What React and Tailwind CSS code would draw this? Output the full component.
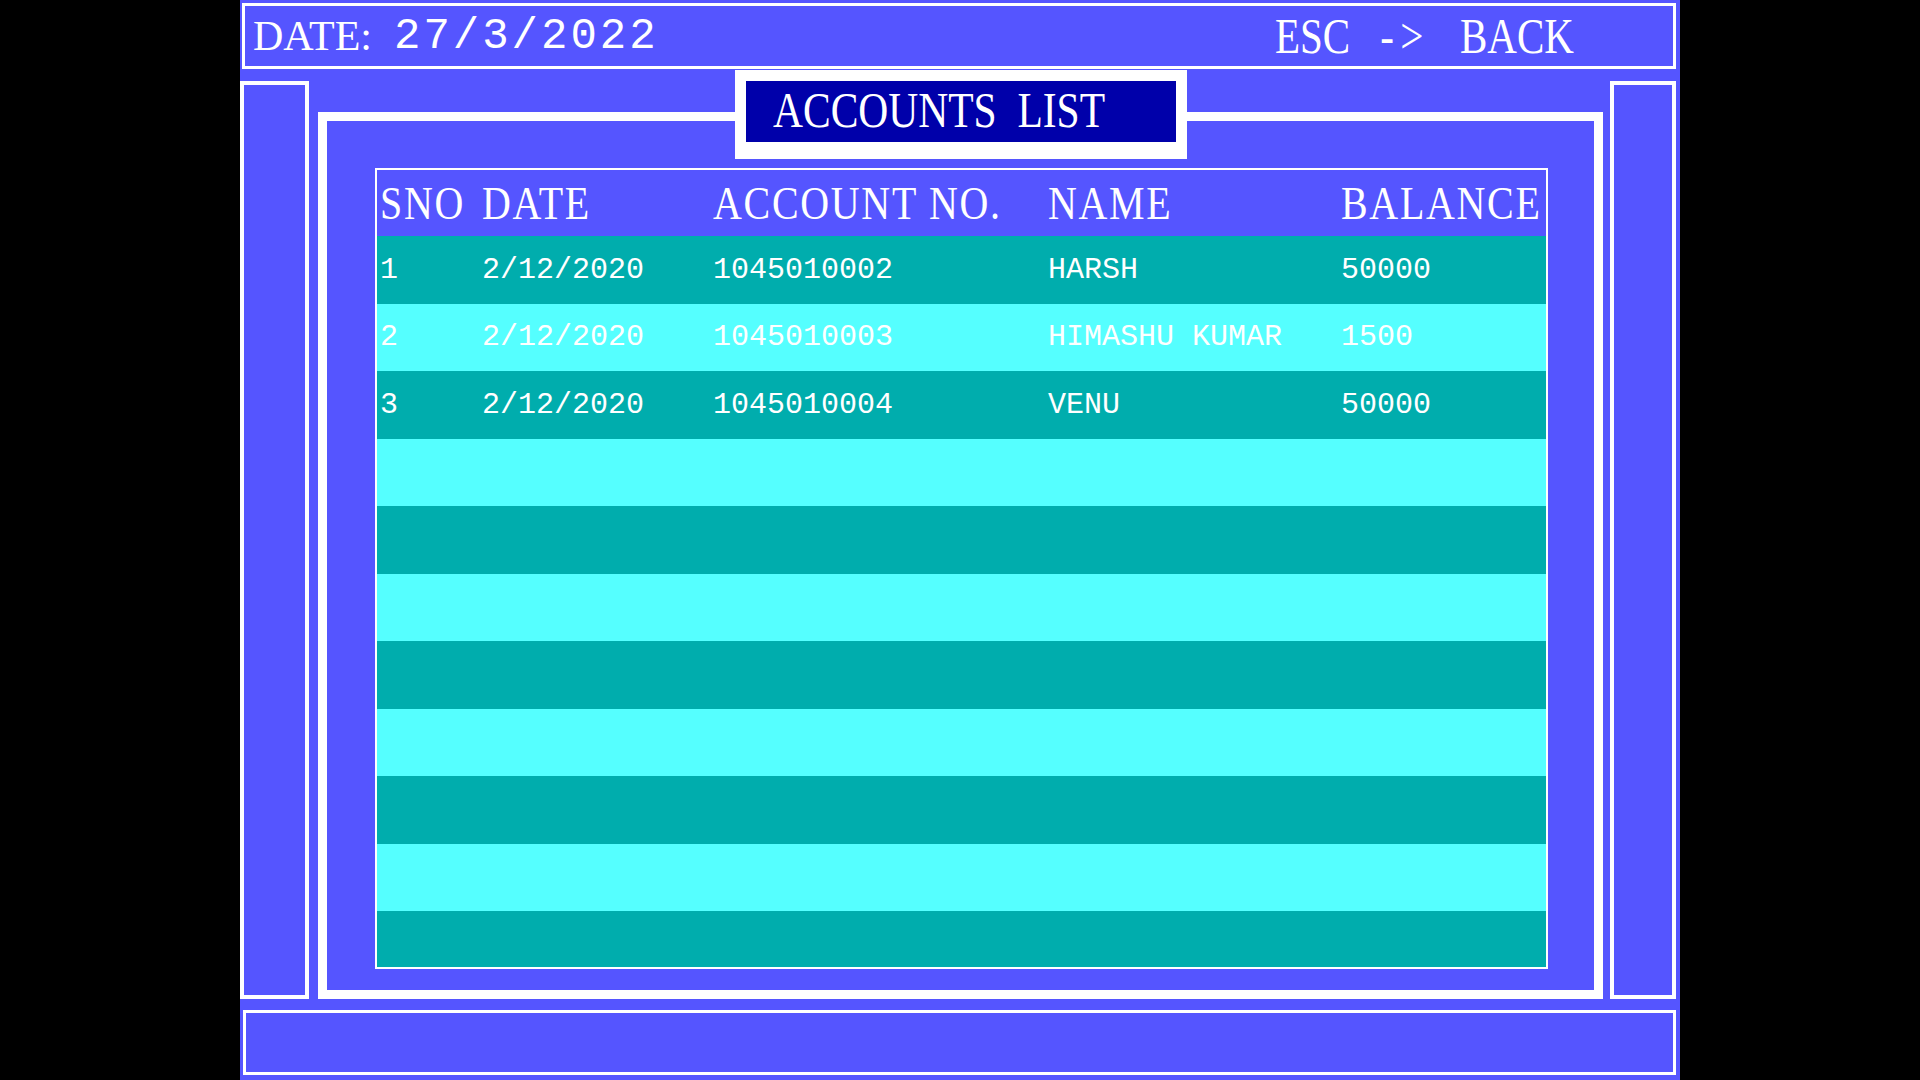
import React from "react";

const rows = [
  ["1", "2/12/2020", "1045010002", "HARSH", "50000"],
  ["2", "2/12/2020", "1045010003", "HIMASHU KUMAR", "1500"],
  ["3", "2/12/2020", "1045010004", "VENU", "50000"],
  ["", "", "", "", ""],
  ["", "", "", "", ""],
  ["", "", "", "", ""],
  ["", "", "", "", ""],
  ["", "", "", "", ""],
  ["", "", "", "", ""],
  ["", "", "", "", ""],
];

const serif = "font-['Liberation_Serif',serif]";
const mono = "font-['Liberation_Mono',monospace]";

function HeaderCell({ children }) {
  return (
    <div className="flex items-center h-full">
      <span className={`${serif} text-[47px] leading-none tracking-[2px] text-white whitespace-pre inline-block origin-left scale-x-[0.85]`}>
        {children}
      </span>
    </div>
  );
}

export default function App() {
  return (
    <div className="w-[1920px] h-[1080px] bg-black flex justify-center overflow-hidden">
      <div className="w-[1440px] h-[1080px] bg-[#5555FF] flex flex-col">
        {/* Top bar */}
        <div className="mt-[3px] ml-[2px] w-[1434px] h-[66px] border-[3px] border-white flex items-center shrink-0">
          <div className="w-[1030px] pl-[8px] flex items-center text-white">
            <span className={`${serif} text-[42px] leading-none`}>DATE:</span>
            <span className={`${mono} text-[44px] leading-none tracking-[3px] ml-[22px]`}>27/3/2022</span>
          </div>
          <span className={`${serif} text-[50px] leading-none text-white whitespace-pre inline-block origin-left scale-x-[0.82] [word-spacing:24px]`}>
            ESC <span className="tracking-[8px]">-&gt;</span> BACK
          </span>
        </div>

        {/* Middle */}
        <div className="mt-[12px] h-[918px] flex shrink-0">
          <div className="w-[69px] border-[4px] border-white" />
          <div className="ml-[9px] w-[1285px] mt-[31px] relative border-[9px] border-white pt-[47px] pl-[48px] pr-[46px] pb-[21px]">
            {/* Title */}
            <div className="absolute top-[-51px] left-[408px] w-[452px] h-[89px] bg-white pt-[11px] px-[11px] pb-[17px]">
              <div className="w-full h-full bg-[#0000AA] flex items-center pl-[27px] pb-[4px]">
                <span className={`${serif} text-[50px] leading-none text-white whitespace-pre inline-block origin-left scale-x-[0.83]`}>
                  ACCOUNTS  LIST
                </span>
              </div>
            </div>

            {/* Table */}
            <div className="w-full h-full border-2 border-white flex flex-col">
              <div className="h-[66px] shrink-0 grid grid-cols-[102px_231px_335px_293px_1fr] pl-[3px] bg-[#5555FF]">
                <HeaderCell>SNO</HeaderCell>
                <HeaderCell>DATE</HeaderCell>
                <HeaderCell>ACCOUNT NO.</HeaderCell>
                <HeaderCell>NAME</HeaderCell>
                <HeaderCell>BALANCE</HeaderCell>
              </div>
              {rows.map((r, i) => (
                <div
                  key={i}
                  className={`h-[67.5px] shrink-0 grid grid-cols-[102px_231px_335px_293px_1fr] pl-[3px] ${
                    i % 2 === 0 ? "bg-[#00ADAD]" : "bg-[#55FFFF]"
                  }`}
                >
                  {r.map((c, j) => (
                    <div key={j} className={`flex items-center ${mono} text-[30px] leading-none text-white whitespace-pre`}>
                      {c}
                    </div>
                  ))}
                </div>
              ))}
              <div className="flex-1 bg-[#00ADAD]" />
            </div>
          </div>
          <div className="ml-[7px] w-[66px] border-[4px] border-white" />
        </div>

        {/* Bottom bar */}
        <div className="mt-[11px] ml-[3px] w-[1433px] h-[65px] border-[3px] border-white shrink-0" />
      </div>
    </div>
  );
}
